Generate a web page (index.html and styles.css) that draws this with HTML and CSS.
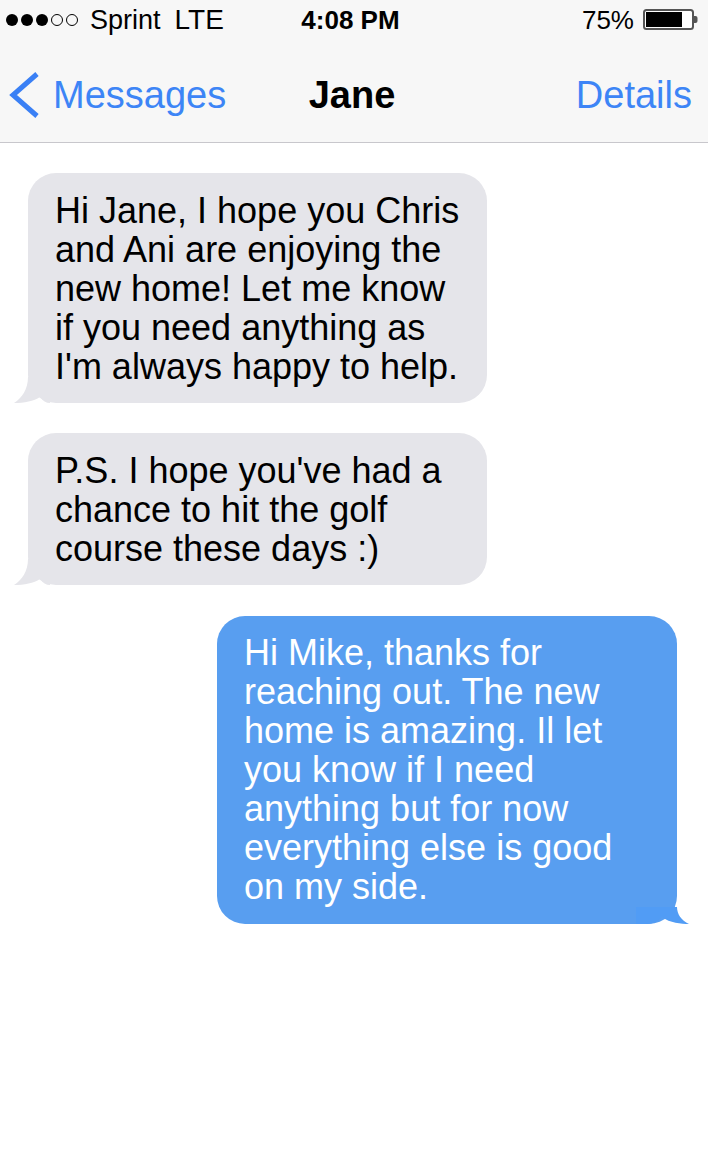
FILE: index.html
```html
<!DOCTYPE html>
<html lang="en">
<head>
<meta charset="utf-8">
<title>Jane</title>
<link rel="stylesheet" href="styles.css">
</head>
<body>
<div class="phone">
  <header class="status-bar">
    <div class="status-left">
      <svg class="signal" width="78" height="14" viewBox="0 0 78 14">
        <circle cx="8" cy="7" r="6" fill="#000"/>
        <circle cx="23" cy="7" r="6" fill="#000"/>
        <circle cx="38" cy="7" r="6" fill="#000"/>
        <circle cx="53" cy="7" r="5.5" fill="none" stroke="#000" stroke-width="1"/>
        <circle cx="68" cy="7" r="5.5" fill="none" stroke="#000" stroke-width="1"/>
      </svg>
      <span class="carrier">Sprint</span>
      <span class="network">LTE</span>
    </div>
    <div class="status-time">4:08 PM</div>
    <div class="status-right">
      <span class="battery-pct">75%</span>
      <svg class="battery" width="56" height="22" viewBox="0 0 56 22">
        <rect x="1" y="1" width="49" height="19" rx="2.5" fill="#fff" stroke="#555" stroke-width="2"/>
        <rect x="3" y="3" width="36" height="15" fill="#000"/>
        <path d="M51 7 h1.5 a2 2 0 0 1 2 2 v3 a2 2 0 0 1 -2 2 h-1.5 z" fill="#555"/>
      </svg>
    </div>
  </header>

  <nav class="nav-bar">
    <a class="nav-back" href="#">
      <svg class="chevron" width="34" height="50" viewBox="0 0 34 50">
        <polyline points="29,5 5,26 29,47" fill="none" stroke="#3a80f5" stroke-width="5" stroke-linejoin="miter"/>
      </svg>
      <span>Messages</span>
    </a>
    <h1 class="nav-title">Jane</h1>
    <a class="nav-action" href="#">Details</a>
  </nav>

  <main class="thread">
    <div class="bubble bubble-in">
      <p>Hi Jane, I hope you Chris<br>and Ani are enjoying the<br>new home! Let me know<br>if you need anything as<br>I'm always happy to help.</p>
      <svg class="tail tail-in" width="36" height="26" viewBox="0 0 36 26">
        <path d="M14 0 L36 0 L36 26 C32 26 29 24 26 20 C20 24 10 26 0 26 C8 21 14 12 14 0 Z" fill="#e5e5ea"/>
      </svg>
    </div>

    <div class="bubble bubble-in">
      <p>P.S. I hope you've had a<br>chance to hit the golf<br>course these days :)</p>
      <svg class="tail tail-in" width="36" height="26" viewBox="0 0 36 26">
        <path d="M14 0 L36 0 L36 26 C32 26 29 24 26 20 C20 24 10 26 0 26 C8 21 14 12 14 0 Z" fill="#e5e5ea"/>
      </svg>
    </div>

    <div class="bubble bubble-out">
      <p>Hi Mike, thanks for<br>reaching out. The new<br>home is amazing. Il let<br>you know if I need<br>anything but for now<br>everything else is good<br>on my side.</p>
      <svg class="tail tail-out" width="53" height="17" viewBox="0 0 53 17">
        <path d="M0 0 L41 0 C41 7 45 13 53 17 C45 17 34 16 26 10 C22 14 18 17 10 17 L0 17 Z" fill="#519cf5"/>
      </svg>
    </div>
  </main>
</div>
</body>
</html>
```

FILE: styles.css
```css
* {
  box-sizing: border-box;
}

html, body {
  margin: 0;
  padding: 0;
  background: #ffffff;
}

body {
  font-family: "Liberation Sans", Arial, Helvetica, sans-serif;
  color: #000;
}

.phone {
  width: 708px;
  min-height: 1172px;
  background: #fff;
}

/* status bar */
.status-bar {
  height: 40px;
  background: #f7f7f7;
  display: grid;
  grid-template-columns: 1fr auto 1fr;
  align-items: center;
  font-size: 26px;
  padding: 0 9px 0 4px;
}

.status-left {
  display: flex;
  align-items: center;
  font-size: 27px;
}

.signal {
  display: block;
  margin-right: 8px;
}

.carrier {
  margin-right: 14px;
}

.network {
  font-size: 28px;
}

.status-time {
  font-weight: bold;
  padding-right: 2px;
}

.status-right {
  display: flex;
  align-items: center;
  justify-content: flex-end;
}

.battery-pct {
  margin-right: 9px;
}

.battery {
  display: block;
}

/* nav bar */
.nav-bar {
  height: 103px;
  padding: 8px 16px 0 8px;
  background: #f7f7f7;
  border-bottom: 1px solid #c8c7cc;
  display: grid;
  grid-template-columns: 1fr auto 1fr;
  align-items: center;
  font-size: 38px;
}

.nav-back {
  display: flex;
  align-items: center;
  color: #3d85f6;
  text-decoration: none;
}

.chevron {
  display: block;
  margin-right: 11px;
  margin-top: -2px;
}

.nav-title {
  margin: 0;
  font-size: 38px;
  font-weight: bold;
  padding-left: 4px;
}

.nav-action {
  justify-self: end;
  color: #3d85f6;
  text-decoration: none;
}

/* message thread */
.thread {
  display: flex;
  flex-direction: column;
  gap: 30px;
  padding-top: 30px;
}

.bubble {
  position: relative;
  border-radius: 28px;
  font-size: 36px;
  line-height: 39px;
}

.bubble p {
  margin: 0;
  position: relative;
  z-index: 1;
}

.bubble-in {
  align-self: flex-start;
  margin-left: 28px;
  width: 459px;
  padding: 18px 18px 17px 27px;
  background: #e5e5ea;
  color: #000;
}

.bubble-out {
  align-self: flex-end;
  margin-right: 31px;
  margin-top: 1px;
  width: 460px;
  padding: 17px 18px 18px 27px;
  background: #589ef0;
  color: #fff;
}

.tail {
  position: absolute;
  bottom: 0;
  display: block;
}

.tail-in {
  left: -14px;
}

.tail-out {
  right: -12px;
}
```
